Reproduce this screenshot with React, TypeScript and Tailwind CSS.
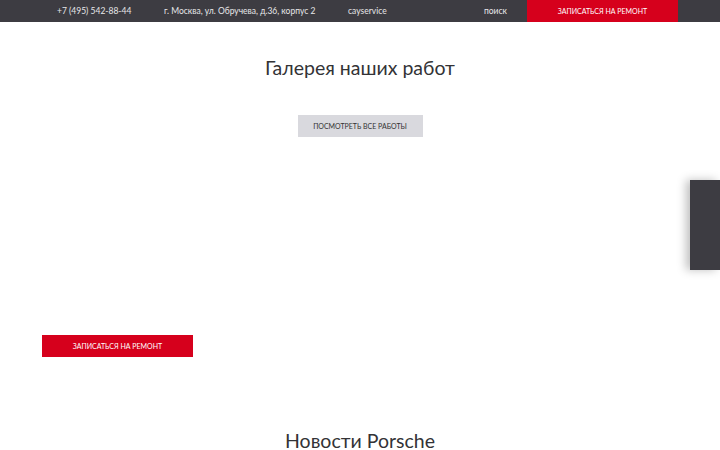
export default function App() {
  return (
    <div
      className="w-[720px] h-[450px] overflow-hidden bg-white relative"
      style={{ fontFamily: 'Lato, "Noto Sans", sans-serif' }}
    >
      <header className="h-[22px] bg-[#3d3c42] flex items-center text-[8.5px] text-[#e6e6e8]">
        <span className="ml-[57px] w-[107px]">+7 (495) 542-88-44</span>
        <span className="w-[184px]">г. Москва, ул. Обручева, д.36, корпус 2</span>
        <span className="w-[136px]">cayservice</span>
        <span className="w-[43px]">поиск</span>
        <a className="h-full w-[151px] bg-[#d6001c] flex items-center justify-center text-[7px] text-white uppercase">
          Записаться на ремонт
        </a>
      </header>

      <section className="flex flex-col items-center">
        <h2 className="mt-[32px] text-[19.5px] leading-[28px] text-[#333336] font-normal">
          Галерея наших работ
        </h2>
        <button className="mt-[33px] w-[125px] h-[22px] bg-[#d9d9de] text-[7px] text-[#333] uppercase">
          Посмотреть все работы
        </button>
      </section>

      <div className="h-[194px]" />

      <div className="pl-[42px]">
        <button className="w-[151px] h-[22px] bg-[#d6001c] text-white text-[7px] uppercase">
          Записаться на ремонт
        </button>
      </div>

      <h2 className="mt-[70px] text-center text-[19.5px] leading-[28px] text-[#333336]">
        Новости Porsche
      </h2>

      <div className="absolute right-0 top-[180px] w-[30px] h-[90px] bg-[#3d3c42] shadow-[-4px_0_10px_rgba(0,0,0,0.25)]" />
    </div>
  );
}
